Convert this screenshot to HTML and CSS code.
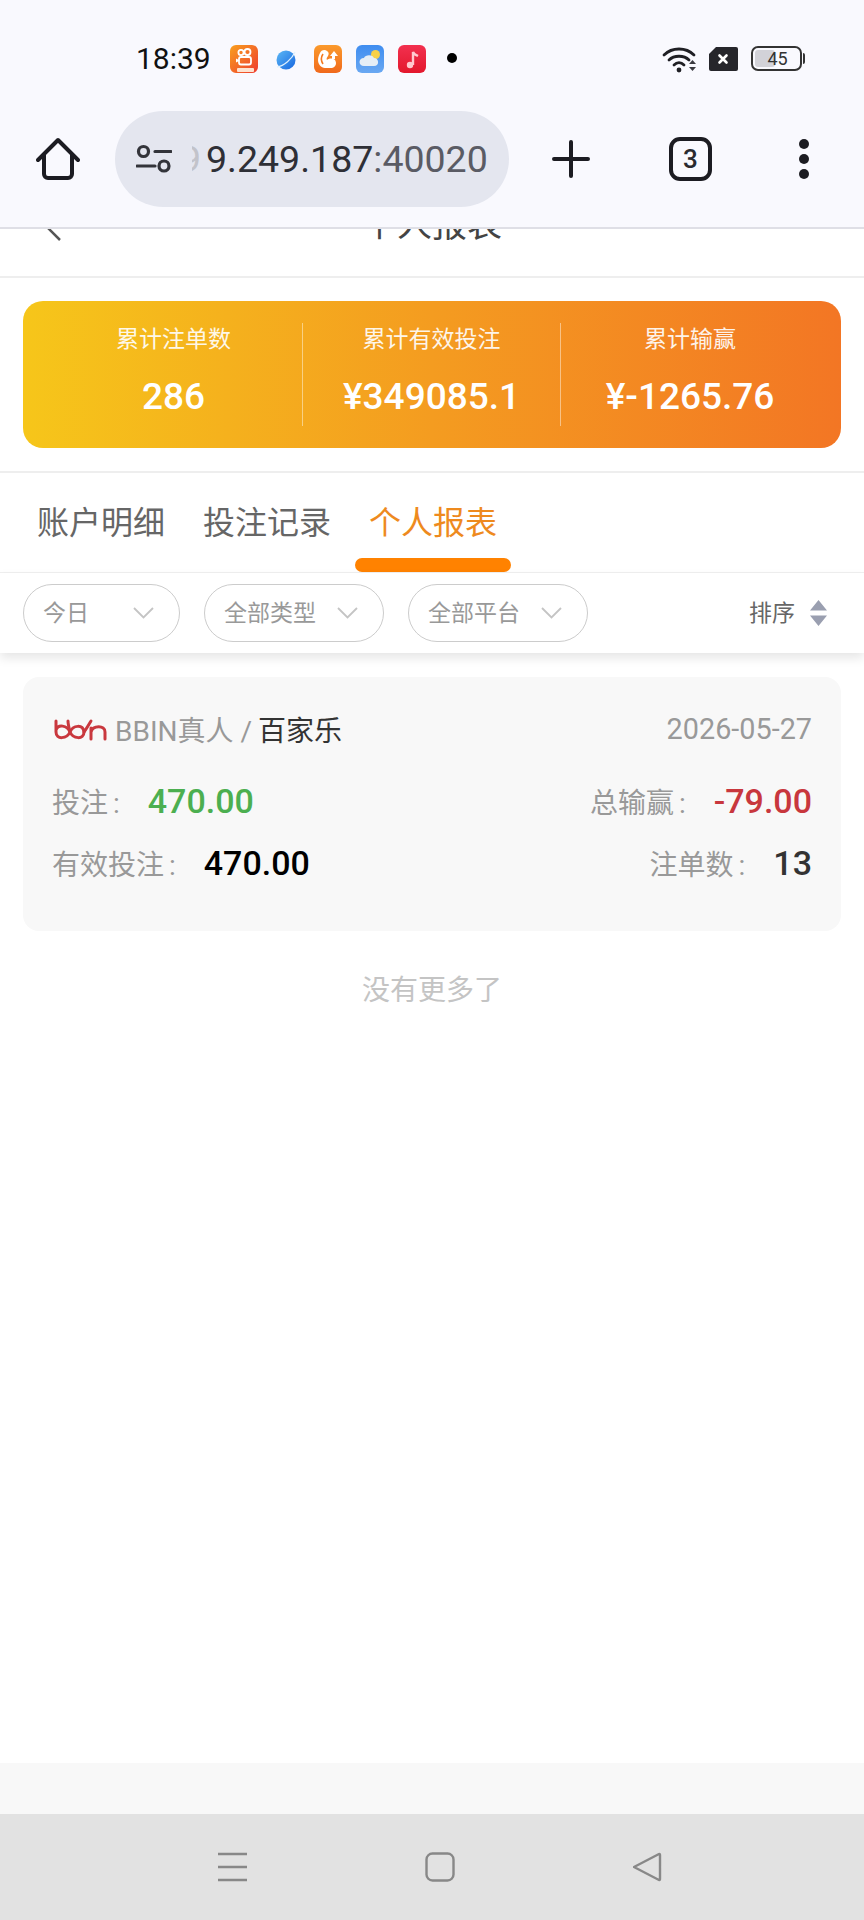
FILE: index.html
```html
<!DOCTYPE html>
<html>
<head>
	<title>个人报表</title>
	<link rel="stylesheet" href="styles.css">
</head>
<body>

<div class="chrome">
	<div class="statusBar">
		<span class="clock">18:39</span>
		<div class="appIcons">
			<svg class="appIcon" viewBox="0 0 28 28">
				<defs><linearGradient id="ks" x1="0" y1="0" x2="1" y2="1"><stop offset="0" stop-color="#f9a01e"/><stop offset="1" stop-color="#ee3b2f"/></linearGradient></defs>
				<rect width="28" height="28" rx="6" fill="url(#ks)"/>
				<circle cx="11" cy="7.5" r="2.6" fill="none" stroke="#fff" stroke-width="1.8"/>
				<circle cx="17.5" cy="7" r="3" fill="none" stroke="#fff" stroke-width="1.8"/>
				<rect x="9" y="12" width="12" height="7.5" rx="2" fill="none" stroke="#fff" stroke-width="1.8"/>
				<path d="M9 15l-3-1.5v4L9 16z" fill="#fff"/>
				<rect x="7" y="23" width="17" height="4" rx="1" fill="#fde3d0"/>
			</svg>
			<svg class="appIcon planet" viewBox="0 0 22 22">
				<defs><linearGradient id="pl" x1="0" y1="0" x2="1" y2="1"><stop offset="0" stop-color="#5cb8f5"/><stop offset="1" stop-color="#1766e0"/></linearGradient></defs>
				<circle cx="11" cy="11" r="9.5" fill="url(#pl)"/>
				<path d="M2 18C9 17 17 10 20 3" fill="none" stroke="#dff0fd" stroke-width="1.2"/>
			</svg>
			<svg class="appIcon" viewBox="0 0 28 28">
				<defs><linearGradient id="uc" x1="0" y1="0" x2="0" y2="1"><stop offset="0" stop-color="#fb9a2c"/><stop offset="1" stop-color="#f0691c"/></linearGradient></defs>
				<rect width="28" height="28" rx="6" fill="url(#uc)"/>
				<path d="M6 8c1-3 5-4 7-2 2 1 2 3 1 5-1 1-2 3-1 4 2-2 6-2 8 0 2 3 1 7-3 8H11c-4 0-7-4-7-8 0-3 1-5 2-7z" fill="#fff"/>
				<path d="M9 9c-2 3-2 7 0 10" fill="none" stroke="#f47a20" stroke-width="1.600"/>
				<path d="M20 6l4 5h-3v3h-3v-3h-2z" fill="#fff"/>
			</svg>
			<svg class="appIcon" viewBox="0 0 28 28">
				<defs><linearGradient id="wx" x1="0" y1="0" x2="0" y2="1"><stop offset="0" stop-color="#3f8df0"/><stop offset="1" stop-color="#6aa8f2"/></linearGradient></defs>
				<rect width="28" height="28" rx="6" fill="url(#wx)"/>
				<circle cx="19.5" cy="9.5" r="4.5" fill="#f8d149"/>
				<path d="M8 21c-6 0-6-8 0-8 1-3 8-4 10 0 5 0 6 8 0 8z" fill="#e6eef6"/>
			</svg>
			<svg class="appIcon" viewBox="0 0 28 28">
				<defs><linearGradient id="mu" x1="0" y1="0" x2="0" y2="1"><stop offset="0" stop-color="#f2304f"/><stop offset="1" stop-color="#e3182d"/></linearGradient></defs>
				<rect width="28" height="28" rx="6" fill="url(#mu)"/>
				<path d="M15 20V7c1 3 3 3 5 4" fill="none" stroke="#ffc9cf" stroke-width="2.4"/>
				<circle cx="12" cy="20" r="3.2" fill="#ffc9cf"/>
			</svg>
			<span class="notifyDot"></span>
		</div>
		<div class="sysIcons">
			<svg class="wifi" width="36" height="28" viewBox="0 0 36 28">
				<g fill="none" stroke="#1f1f24" stroke-width="2.8" stroke-linecap="round">
					<path d="M2 10C10 2 24 2 32 10"/>
					<path d="M7 15C12 10 22 10 27 15"/>
					<path d="M12 20C15 17 19 17 22 20"/>
				</g>
				<circle cx="17" cy="25" r="2.4" fill="#1f1f24"/>
				<path d="M27 19l3.5-4 3.5 4zM27 22l3.5 4 3.5-4z" fill="#3a3a40"/>
			</svg>
			<svg class="simOff" width="29" height="24" viewBox="0 0 29 24">
				<path d="M7 0H27a2 2 0 0 1 2 2V22a2 2 0 0 1-2 2H2a2 2 0 0 1-2-2V7z" fill="#26262b"/>
				<path d="M10.500 8.500l7 7M17.500 8.500l-7 7" stroke="#fff" stroke-width="2.600" stroke-linecap="round"/>
			</svg>
			<div class="battery">
				<div class="batteryBody"><span class="batteryFill"></span><span class="batteryNum">45</span></div>
				<span class="batteryNub"></span>
			</div>
		</div>
	</div>

	<div class="toolbar">
		<svg class="homeIcon" width="44" height="44" viewBox="0 0 44 44">
			<path d="M2 23L22 3l20 20M8 18V37a4 4 0 0 0 4 4H32a4 4 0 0 0 4-4V18" fill="none" stroke="#1c1c22" stroke-width="4" stroke-linecap="round" stroke-linejoin="round"/>
		</svg>
		<div class="urlPill">
			<svg class="tuneIcon" width="36" height="30" viewBox="0 0 36 30">
				<g fill="none" stroke="#33343a" stroke-width="3.200">
					<circle cx="7.500" cy="7.500" r="5"/>
					<circle cx="28" cy="22" r="5"/>
					<path d="M19 7.500H35M1 22H19" stroke-linecap="round"/>
				</g>
			</svg>
			<span class="ghostDigit"><span>9</span></span>
			<span class="urlText">9.249.187<span class="urlPort">:40020</span></span>
		</div>
		<svg class="plusIcon" width="38" height="38" viewBox="0 0 38 38">
			<path d="M19 2V36M2 19H36" stroke="#1c1c22" stroke-width="4" stroke-linecap="round"/>
		</svg>
		<div class="tabCount">3</div>
		<div class="moreDots"><span></span><span></span><span></span></div>
	</div>
</div>

<div class="page">
	<div class="pageHeader">
		<svg class="backIcon" width="16" height="28" viewBox="0 0 16 28">
			<path d="M14 2L2 14l12 12" fill="none" stroke="#555" stroke-width="2.500"/>
		</svg>
		<span class="pageTitle">个人报表</span>
	</div>

	<div class="summaryWrap">
		<div class="summaryCard">
			<div class="summaryCol">
				<div class="summaryLabel">累计注单数</div>
				<div class="summaryValue">286</div>
			</div>
			<div class="summaryCol">
				<div class="summaryLabel">累计有效投注</div>
				<div class="summaryValue">¥349085.1</div>
			</div>
			<div class="summaryCol">
				<div class="summaryLabel">累计输赢</div>
				<div class="summaryValue">¥-1265.76</div>
			</div>
		</div>
	</div>

	<div class="tabs">
		<span class="tab">账户明细</span>
		<span class="tab">投注记录</span>
		<span class="tab tabActive">个人报表</span>
	</div>

	<div class="filters">
		<div class="pill pillShort"><span>今日</span><svg class="chevron" width="21" height="12" viewBox="0 0 21 12"><path d="M1 1l9.500 9.500L20 1" fill="none" stroke="#c4c4c4" stroke-width="1.800"/></svg></div>
		<div class="pill"><span>全部类型</span><svg class="chevron" width="21" height="12" viewBox="0 0 21 12"><path d="M1 1l9.500 9.500L20 1" fill="none" stroke="#c4c4c4" stroke-width="1.800"/></svg></div>
		<div class="pill"><span>全部平台</span><svg class="chevron" width="21" height="12" viewBox="0 0 21 12"><path d="M1 1l9.500 9.500L20 1" fill="none" stroke="#c4c4c4" stroke-width="1.800"/></svg></div>
		<div class="sort">
			<span>排序</span>
			<svg width="17" height="26" viewBox="0 0 17 26"><path d="M8.500 0L17 10.500H0zM8.500 26L0 15.500H17z" fill="#9a9fb0"/></svg>
		</div>
	</div>

	<div class="reportCard">
		<div class="reportHead">
			<div class="reportGame">
				<svg class="bbinLogo" width="53" height="24" viewBox="0 0 53 24">
					<g fill="none" stroke="#c9383e" stroke-width="3" stroke-linecap="round">
						<path d="M2 3V14C2 22 13 21 16 14C19 7 29 6 30 14C30 22 19 21 16 14C13 7 4 6 2 12"/>
						<path d="M16 14C15 10 14 6 14 3"/>
						<path d="M30 14C33 10 35 6 37 3"/>
						<path d="M37 10V21M37 14C39 7 51 7 51 14V21"/>
					</g>
				</svg>
				<span class="gameVendor">BBIN真人 /</span>
				<span class="gameName">百家乐</span>
			</div>
			<span class="reportDate">2026-05-27</span>
		</div>
		<div class="reportRow">
			<div class="stat"><span class="statLabel">投注<i class="colon">:</i></span><span class="statNum green">470.00</span></div>
			<div class="stat"><span class="statLabel">总输赢<i class="colon">:</i></span><span class="statNum red">-79.00</span></div>
		</div>
		<div class="reportRow">
			<div class="stat"><span class="statLabel">有效投注<i class="colon">:</i></span><span class="statNum black">470.00</span></div>
			<div class="stat"><span class="statLabel">注单数<i class="colon">:</i></span><span class="statNum dark">13</span></div>
		</div>
	</div>

	<div class="noMore">没有更多了</div>
</div>

<div class="pageFoot"></div>

<div class="navBar">
	<svg width="29" height="30" viewBox="0 0 29 30"><path d="M0 2H29M0 15H29M0 28H29" stroke="#888" stroke-width="2.400"/></svg>
	<svg width="30" height="30" viewBox="0 0 30 30"><rect x="1.500" y="1.500" width="27" height="27" rx="6" fill="none" stroke="#888" stroke-width="2.400"/></svg>
	<svg width="30" height="30" viewBox="0 0 30 30"><path d="M1 15L26 2Q27 1.500 27 3V27Q27 28.500 26 28Z" fill="none" stroke="#888" stroke-width="2.400" stroke-linejoin="round"/></svg>
</div>

</body>
</html>
```

FILE: styles.css
```css
* {
	box-sizing: border-box;
}
html, body {
	margin: 0;
	height: 100%;
}
body {
	width: 864px;
	height: 1920px;
	display: flex;
	flex-direction: column;
	background: #fff;
	font-family: Roboto, "Noto Sans CJK SC", sans-serif;
	overflow: hidden;
}
svg {
	display: block;
	flex: none;
}

/* browser chrome */
.chrome {
	background: #f9f9fe;
	border-bottom: 2px solid #dfdfe6;
	flex: none;
}
.statusBar {
	height: 111px;
	padding: 6px 60px 0 136px;
	display: flex;
	align-items: center;
}
.clock {
	font-size: 30px;
	color: #111;
	width: 94px;
}
.appIcons {
	display: flex;
	align-items: center;
	gap: 14px;
}
.appIcon {
	width: 28px;
	height: 28px;
}
.planet {
	width: 22px;
	height: 22px;
	margin: 2px 3px 0 3px;
}
.notifyDot {
	width: 10px;
	height: 10px;
	border-radius: 50%;
	background: #000;
	margin-left: 7px;
	margin-top: -2px;
}
.sysIcons {
	margin-left: auto;
	display: flex;
	align-items: center;
}
.wifi {
	margin-right: 11px;
}
.simOff {
	margin-right: 13px;
}
.battery {
	display: flex;
	align-items: center;
	margin-right: -1px;
}
.batteryBody {
	width: 51px;
	height: 25px;
	border: 2px solid #333;
	border-radius: 7px;
	position: relative;
	display: flex;
	align-items: center;
	justify-content: center;
	overflow: hidden;
}
.batteryFill {
	position: absolute;
	left: 2px;
	top: 2px;
	bottom: 2px;
	width: 20px;
	background: #d2d2d8;
	border-radius: 3px;
}
.batteryNum {
	position: relative;
	font-size: 18px;
	color: #333;
	margin-left: 2px;
}
.batteryNub {
	width: 2px;
	height: 11px;
	background: #333;
	margin-left: 1px;
	border-radius: 0 2px 2px 0;
}

.toolbar {
	height: 116px;
	padding: 0 0 20px 36px;
	display: flex;
	align-items: center;
}
.urlPill {
	width: 394px;
	height: 96px;
	margin-left: 35px;
	border-radius: 48px;
	background: #e4e6ef;
	padding-left: 21px;
	display: flex;
	align-items: center;
	font-size: 37.500px;
	color: #2e2f36;
}
.ghostDigit {
	width: 9px;
	margin-left: 20px;
	margin-right: 5px;
	overflow: hidden;
	display: flex;
	justify-content: flex-end;
	color: #c2c3ca;
}
.urlText {
	white-space: nowrap;
}
.urlPort {
	color: #5a5b64;
}
.plusIcon {
	margin-left: 43px;
}
.tabCount {
	width: 43px;
	height: 44px;
	margin-left: 79px;
	border: 4.500px solid #1c1c22;
	border-radius: 11px;
	display: flex;
	align-items: center;
	justify-content: center;
	font-size: 26px;
	font-weight: 500;
	color: #2a2a30;
}
.moreDots {
	margin-left: 87px;
	display: flex;
	flex-direction: column;
	gap: 5px;
}
.moreDots span {
	width: 10px;
	height: 10px;
	border-radius: 50%;
	background: #1c1c22;
}

/* page */
.page {
	flex: 1;
}
.pageHeader {
	height: 49px;
	border-bottom: 2px solid #eee;
	overflow: hidden;
	position: relative;
	display: flex;
	align-items: flex-end;
	justify-content: center;
	padding-bottom: 30px;
}
.backIcon {
	position: absolute;
	left: 46px;
	bottom: 34px;
}
.pageTitle {
	font-size: 35px;
	line-height: 40px;
	color: #444;
	flex: none;
}
.summaryWrap {
	padding: 23px 23px;
	border-bottom: 2px solid #eee;
}
.summaryCard {
	height: 147px;
	border-radius: 20px;
	background: linear-gradient(90deg, #f6c61a 0%, #f49c20 50%, #f37624 100%);
	padding: 22px 22px;
	display: flex;
}
.summaryCol {
	width: 258px;
	text-align: center;
	color: #fff;
	border-right: 1.5px solid rgba(255,255,255,.45);
}
.summaryCol:last-child {
	border-right: 0;
}
.summaryLabel {
	font-size: 23px;
	line-height: 34px;
	opacity: .9;
}
.summaryValue {
	margin-top: 18px;
	font-size: 37px;
	line-height: 44px;
	font-weight: 500;
}
.tabs {
	height: 100px;
	padding: 0 0 6px 37px;
	display: flex;
	align-items: center;
	gap: 38px;
	border-bottom: 1px solid #f0f0f0;
}
.tab {
	font-size: 32px;
	color: #666;
}
.tabActive {
	position: relative;
	color: #ee8a1e;
	align-self: stretch;
	display: flex;
	align-items: center;
}
.tabActive::after {
	content: "";
	position: absolute;
	left: -14px;
	bottom: -6px;
	width: 156px;
	height: 14px;
	border-radius: 7px;
	background: #ff8200;
}
.filters {
	height: 80px;
	padding: 11px 37px 11px 23px;
	display: flex;
	align-items: center;
	gap: 24px;
	box-shadow: 0 5px 10px rgba(0,0,0,.1);
	position: relative;
}
.pill {
	width: 180px;
	height: 58px;
	border: 1.5px solid #ccc;
	border-radius: 29px;
	padding: 0 25px 0 19px;
	display: flex;
	align-items: center;
	justify-content: space-between;
	font-size: 23px;
	color: #999;
}
.pill span, .sort span {
	padding-bottom: 4px;
}
.pillShort {
	width: 157px;
}
.sort {
	margin-left: auto;
	display: flex;
	align-items: center;
	gap: 15px;
	font-size: 23px;
	color: #666;
}

/* report card */
.reportCard {
	margin: 24px 23px 0;
	height: 254px;
	background: #f8f8f8;
	border-radius: 16px;
	padding: 36px 29px 0 31px;
}
.reportHead {
	height: 32px;
	display: flex;
	align-items: center;
	justify-content: space-between;
}
.reportGame {
	display: flex;
	align-items: center;
	font-size: 28px;
}
.bbinLogo {
	margin-right: 8px;
	margin-top: 2px;
}
.gameVendor {
	color: #999;
}
.gameName {
	color: #333;
	margin-left: 6px;
}
.reportDate {
	font-size: 28.800px;
	color: #999;
}
.reportRow {
	height: 40px;
	margin-top: 23px;
	display: flex;
	align-items: center;
	justify-content: space-between;
}
.reportHead + .reportRow {
	margin-top: 36px;
}
.reportHead + .reportRow + .reportRow {
	margin-top: 22px;
}
.stat {
	display: flex;
	align-items: center;
	gap: 28px;
}
.statLabel {
	font-size: 28px;
	color: #999;
	margin-left: -2px;
}
.colon {
	font-style: normal;
	margin-left: 5px;
}
.statNum {
	font-size: 34px;
}
.green {
	color: #4caf50;
	font-weight: 500;
}
.red {
	color: #c8373d;
	font-weight: 500;
}
.black {
	color: #000;
	font-weight: 500;
}
.dark {
	color: #333;
	font-weight: 500;
}
.noMore {
	margin-top: 40px;
	text-align: center;
	font-size: 28px;
	line-height: 40px;
	color: #c4c4c4;
}

.pageFoot {
	height: 51px;
	background: #f8f8f8;
	flex: none;
}
.navBar {
	height: 106px;
	background: #e2e2e2;
	flex: none;
	padding: 38px 0 0 218px;
	display: flex;
	align-items: flex-start;
	gap: 178px;
}
```
